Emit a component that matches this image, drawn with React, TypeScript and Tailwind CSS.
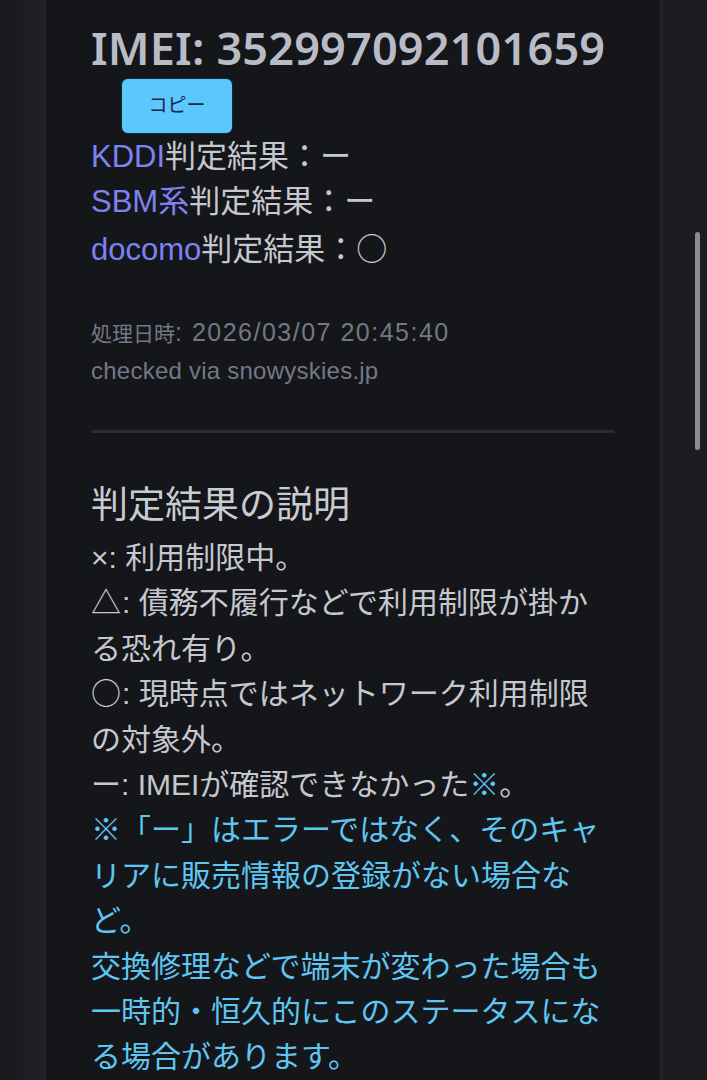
import React from "react";

const sans = '"Liberation Sans", "Noto Sans CJK JP", sans-serif';
const cjk = '"Noto Sans CJK JP", sans-serif';

function ResultLine({ carrier, mark }: { carrier: string; mark: React.ReactNode }) {
  return (
    <p className="leading-[45px]">
      <span className="text-[#7c82f0]">{carrier}</span>
      <span>判定結果：{mark}</span>
    </p>
  );
}

// line whose leading symbol (△ / ○) is drawn full width from the CJK font
function SymbolLine({ sym, text }: { sym: string; text: string }) {
  return (
    <p>
      <span className="leading-[0] mr-[1px]" style={{ fontFamily: cjk }}>
        {sym}
      </span>
      {text}
    </p>
  );
}

export default function App() {
  return (
    <div
      className="min-h-screen bg-[#1b1c20] flex text-[#c6c8d0]"
      style={{ fontFamily: sans }}
    >
      <div className="w-[44px] shrink-0 bg-gradient-to-r from-[#18191d] to-[#202126]" />
      <main className="w-[618px] shrink-0 bg-[#15161a] border-l-2 border-r-2 border-[#24252a] h-[1080px] overflow-hidden">
        <div className="pl-[45px] pr-[45px] pt-[22px]">
          <h1
            className="text-[45px] leading-[52px] font-semibold text-[#b9bcc7] tracking-[0.004em]"
            style={{ fontFamily: '"Noto Sans", "Liberation Sans", sans-serif' }}
          >
            IMEI: 352997092101659
          </h1>
          <button className="ml-[30px] mt-[4px] w-[112px] h-[56px] rounded-[7px] bg-[#5ac8fa] text-[#1a2550] text-[19px] border border-[#0f2a40]">
            コピー
          </button>
          <div className="text-[31px]">
            <ResultLine carrier="KDDI" mark="ー" />
            <ResultLine carrier="SBM系" mark="ー" />
            <ResultLine carrier="docomo" mark={<span style={{ fontFamily: cjk }}>○</span>} />
          </div>

          <div className="mt-[43px] leading-[35px] text-[#747886]">
            <p>
              <span className="text-[21px]">処理日時</span>
              <span className="text-[25px] tracking-[0.06em]">: 2026/03/07 20:45:40</span>
            </p>
            <p className="text-[24px] tracking-[0.01em]">checked via snowyskies.jp</p>
          </div>

          <div className="mt-[42px] h-[3px] w-[524px] bg-[#2a2b34] rounded-full" />

          <h2 className="mt-[50px] text-[37px] leading-[46px] text-[#c9cbd2]">
            判定結果の説明
          </h2>
          <div className="text-[30px] leading-[45.4px] w-[526px] mt-[6px]">
            <p>×: 利用制限中。</p>
            <SymbolLine sym="△" text=": 債務不履行などで利用制限が掛かる恐れ有り。" />
            <SymbolLine sym="○" text=": 現時点ではネットワーク利用制限の対象外。" />
            <p>
              ー: IMEIが確認できなかった<span className="text-[#5ac8fa]">※</span>。
            </p>
            <p className="text-[#5fc6f2]">
              ※「ー」はエラーではなく、そのキャリアに販売情報の登録がない場合など。
            </p>
            <p className="text-[#5fc6f2]">
              交換修理などで端末が変わった場合も一時的・恒久的にこのステータスになる場合があります。
            </p>
          </div>
        </div>
      </main>
      <div className="flex-1 bg-[#1c1d21] relative">
        <div className="absolute left-[33px] top-[232px] w-[5px] h-[218px] rounded-full bg-[#8b8c92]" />
      </div>
    </div>
  );
}
